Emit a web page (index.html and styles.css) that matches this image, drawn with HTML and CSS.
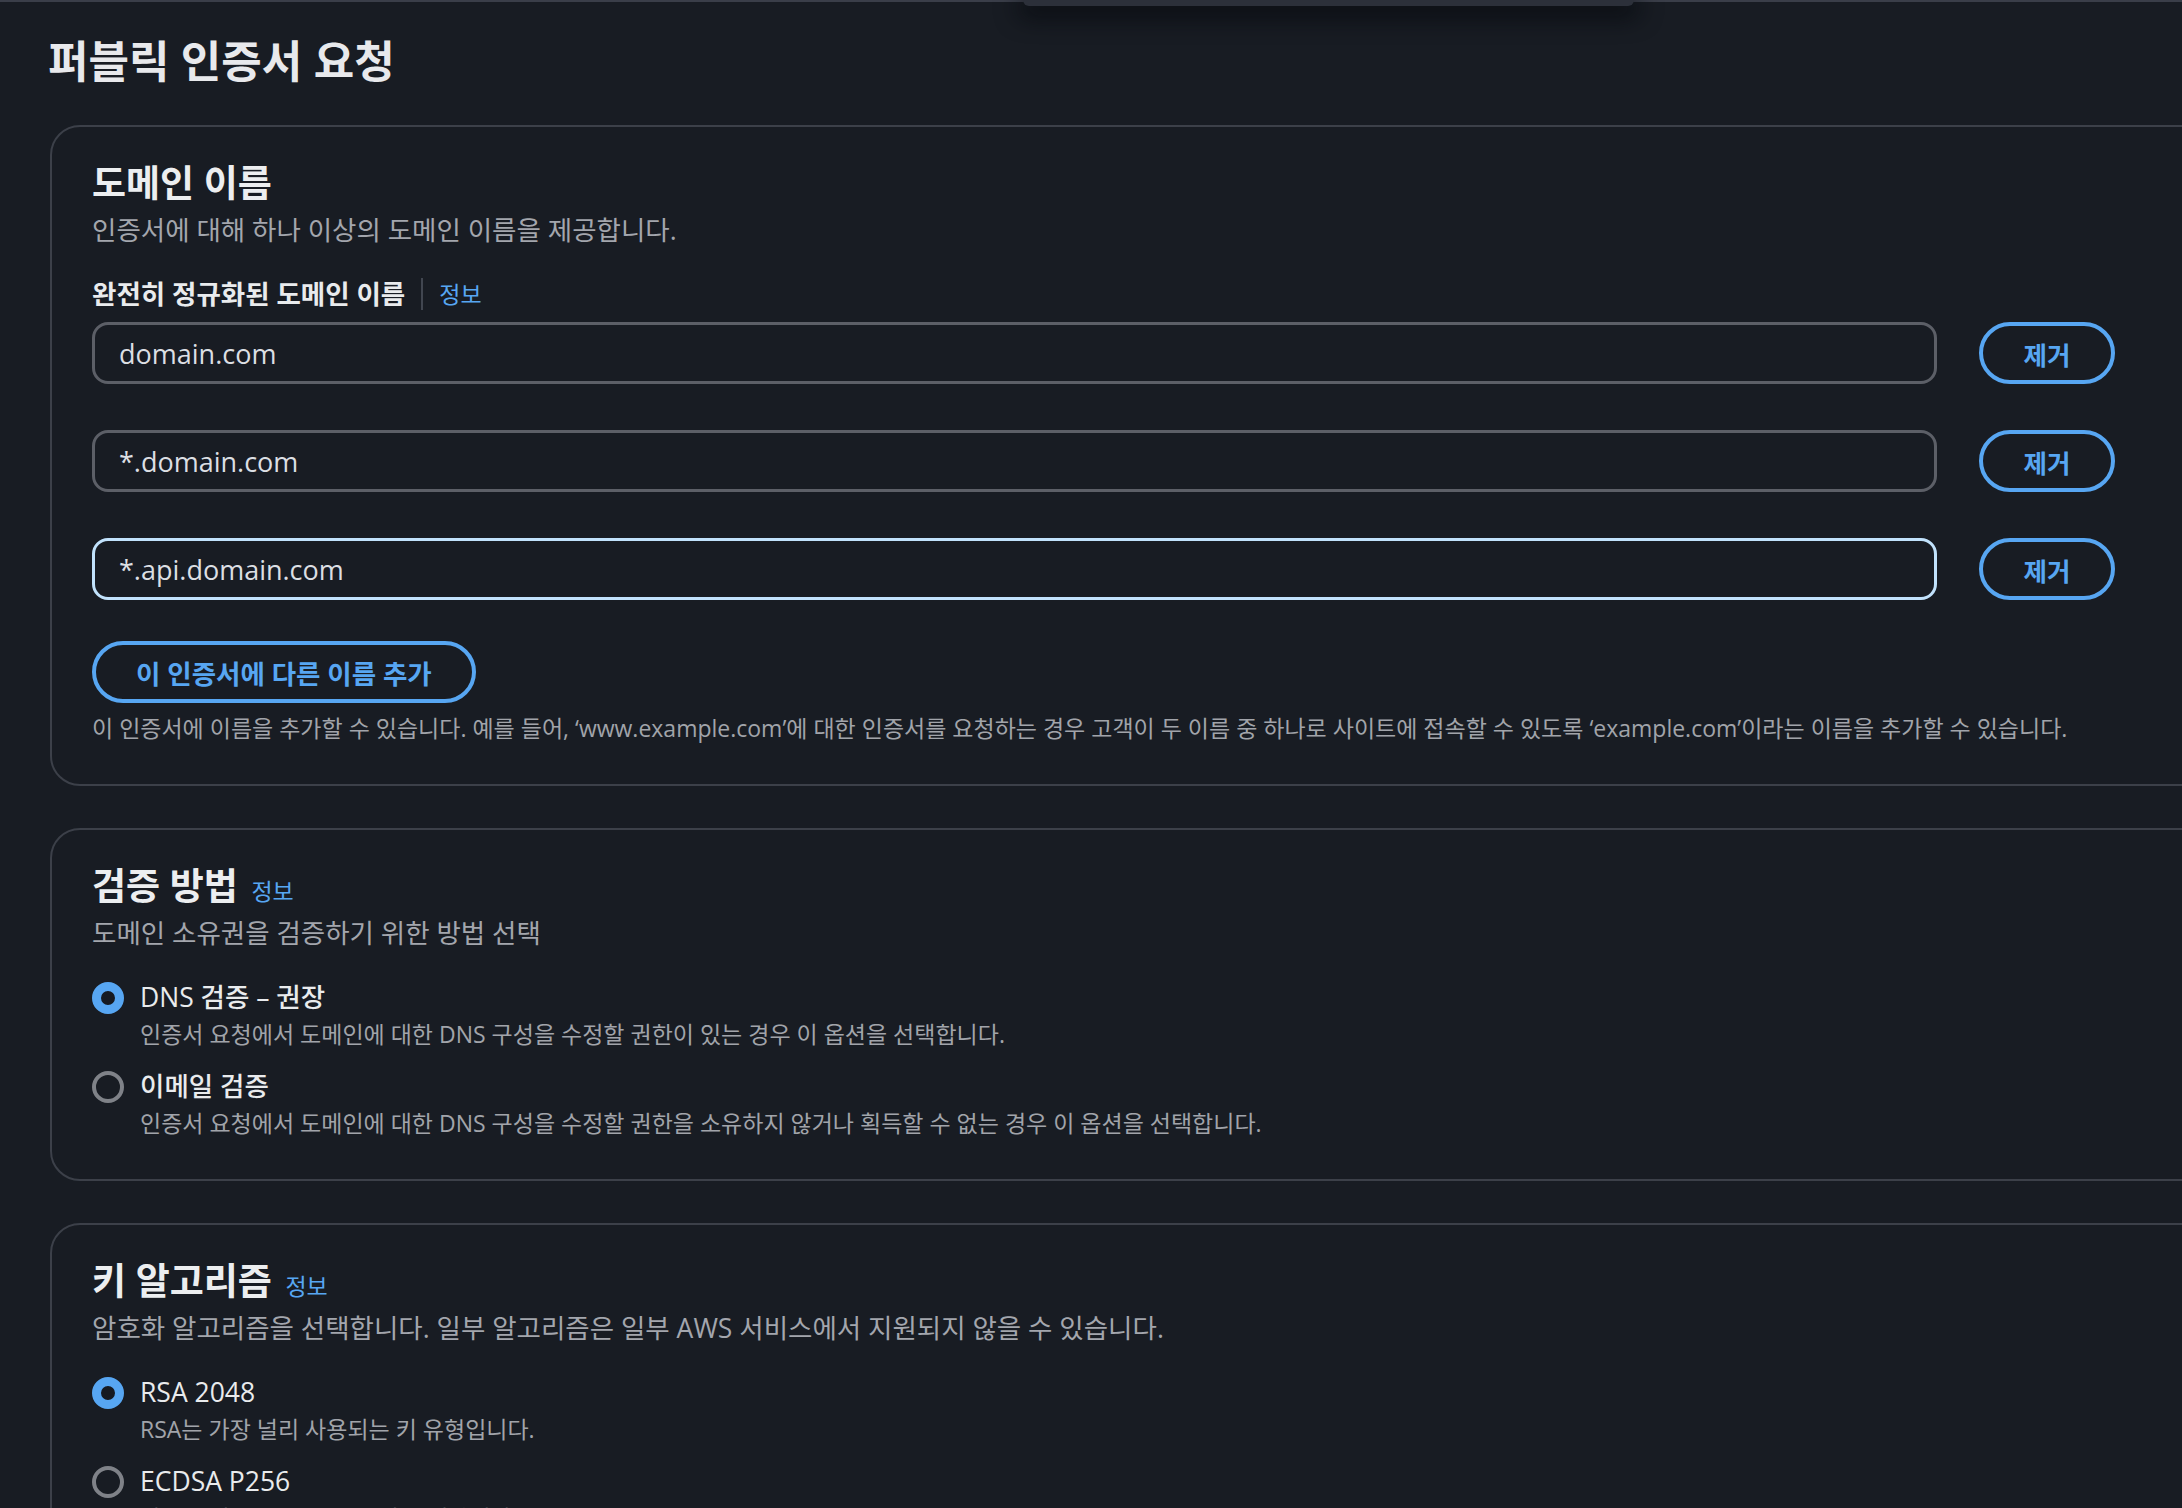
FILE: index.html
```html
<!DOCTYPE html>
<html lang="ko">
<head>
    <meta charset="UTF-8">
    <meta name="viewport" content="width=device-width, initial-scale=1.0">
    <title>퍼블릭 인증서 요청</title>
    <link rel="stylesheet" href="styles.css">
</head>
<body>
    <div class="top-edge"></div>
    <div class="menu-edge"></div>

    <main class="page">
        <h1 class="page-title">퍼블릭 인증서 요청</h1>

        <section class="panel">
            <h2 class="panel-title">도메인 이름</h2>
            <p class="panel-desc">인증서에 대해 하나 이상의 도메인 이름을 제공합니다.</p>

            <div class="field-label">
                <span>완전히 정규화된 도메인 이름</span>
                <span class="divider"></span>
                <a class="info" href="#">정보</a>
            </div>

            <div class="name-list">
                <div class="name-row">
                    <input class="text-input" type="text" value="domain.com">
                    <button class="pill-btn remove-btn">제거</button>
                </div>
                <div class="name-row">
                    <input class="text-input" type="text" value="*.domain.com">
                    <button class="pill-btn remove-btn">제거</button>
                </div>
                <div class="name-row">
                    <input class="text-input focused" type="text" value="*.api.domain.com">
                    <button class="pill-btn remove-btn">제거</button>
                </div>
            </div>

            <button class="pill-btn add-btn">이 인증서에 다른 이름 추가</button>
            <p class="hint">이 인증서에 이름을 추가할 수 있습니다. 예를 들어, ‘www.example.com’에 대한 인증서를 요청하는 경우 고객이 두 이름 중 하나로 사이트에 접속할 수 있도록 ‘example.com’이라는 이름을 추가할 수 있습니다.</p>
        </section>

        <section class="panel">
            <h2 class="panel-title">검증 방법 <a class="info" href="#">정보</a></h2>
            <p class="panel-desc">도메인 소유권을 검증하기 위한 방법 선택</p>

            <div class="radio-group">
                <label class="radio-option">
                    <span class="radio checked"></span>
                    <span class="radio-text">
                        <span class="radio-label">DNS 검증 – 권장</span>
                        <span class="radio-desc">인증서 요청에서 도메인에 대한 DNS 구성을 수정할 권한이 있는 경우 이 옵션을 선택합니다.</span>
                    </span>
                </label>
                <label class="radio-option">
                    <span class="radio"></span>
                    <span class="radio-text">
                        <span class="radio-label">이메일 검증</span>
                        <span class="radio-desc">인증서 요청에서 도메인에 대한 DNS 구성을 수정할 권한을 소유하지 않거나 획득할 수 없는 경우 이 옵션을 선택합니다.</span>
                    </span>
                </label>
            </div>
        </section>

        <section class="panel">
            <h2 class="panel-title">키 알고리즘 <a class="info" href="#">정보</a></h2>
            <p class="panel-desc">암호화 알고리즘을 선택합니다. 일부 알고리즘은 일부 AWS 서비스에서 지원되지 않을 수 있습니다.</p>

            <div class="radio-group">
                <label class="radio-option">
                    <span class="radio checked"></span>
                    <span class="radio-text">
                        <span class="radio-label">RSA 2048</span>
                        <span class="radio-desc">RSA는 가장 널리 사용되는 키 유형입니다.</span>
                    </span>
                </label>
                <label class="radio-option">
                    <span class="radio"></span>
                    <span class="radio-text">
                        <span class="radio-label">ECDSA P256</span>
                        <span class="radio-desc">암호화 강도는 RSA 3072와 동일합니다.</span>
                    </span>
                </label>
            </div>
        </section>
    </main>
</body>
</html>
```

FILE: styles.css
```css
body {
    margin: 0;
    background-color: #181c23;
    color: #e9ebed;
    font-family: "Open Sans", "Noto Sans CJK KR", sans-serif;
    overflow: hidden;
}

.top-edge {
    height: 2px;
    background-color: #3a3e49;
}

/* bottom of a dropdown panel hanging over the page */
.menu-edge {
    position: absolute;
    top: 0;
    left: 1023px;
    width: 611px;
    height: 6px;
    background-color: #2c303a;
    border-radius: 0 0 10px 10px;
    box-shadow: 0 6px 22px 6px rgba(5, 8, 14, 0.75);
}

.page {
    padding: 35px 0 0 48px;
}

.page-title {
    margin: 0 0 40px 0;
    font-size: 44px;
    line-height: 48px;
    font-weight: 700;
    color: #e8e9ec;
}

.panel {
    margin: 0 -60px 42px 2px;
    padding: 34px 40px 41px 40px;
    border: 2px solid #3c4049;
    border-radius: 30px;
}

.panel-title {
    margin: 0;
    font-size: 37px;
    line-height: 44px;
    font-weight: 700;
    color: #eceef0;
}

.panel-title .info {
    margin-left: 4px;
    line-height: 20px;
}

.panel-desc {
    margin: 8px 0 0 0;
    font-size: 26.5px;
    line-height: 34px;
    color: #a3a6ad;
}

.info {
    font-size: 23px;
    font-weight: 400;
    color: #57a6f2;
    text-decoration: none;
}

.field-label {
    display: flex;
    align-items: center;
    margin-top: 30px;
    font-size: 26.5px;
    line-height: 34px;
    font-weight: 700;
}

.field-label .divider {
    width: 2px;
    height: 32px;
    margin: 0 16px;
    background-color: #414650;
}

.name-list {
    display: flex;
    flex-direction: column;
    gap: 46px;
    width: 2023px;
    margin-top: 11px;
}

.name-row {
    display: flex;
    gap: 42px;
}

.text-input {
    flex: 1;
    height: 62px;
    box-sizing: border-box;
    padding: 0 24px;
    border: 3px solid #5c5f67;
    border-radius: 16px;
    background-color: transparent;
    color: #dcdfe3;
    font-family: "Open Sans", "Noto Sans CJK KR", sans-serif;
    font-size: 27px;
    outline: none;
}

.text-input.focused {
    border-color: #c1e2fc;
}

.pill-btn {
    height: 62px;
    box-sizing: border-box;
    border: 4px solid #57a6f2;
    border-radius: 31px;
    background-color: transparent;
    color: #57a6f2;
    font-family: "Open Sans", "Noto Sans CJK KR", sans-serif;
    font-size: 26.5px;
    font-weight: 700;
    cursor: pointer;
}

.remove-btn {
    width: 136px;
    flex: none;
    font-size: 25.5px;
}

.add-btn {
    display: block;
    margin-top: 41px;
    padding: 0 40px;
}

.hint {
    margin: 10px 0 0 0;
    font-size: 23px;
    line-height: 30px;
    color: #a1a4aa;
    white-space: nowrap;
}

.radio-group {
    display: flex;
    flex-direction: column;
    gap: 20px;
    margin-top: 30px;
}

.radio-option {
    display: flex;
    gap: 16px;
}

.radio {
    flex: none;
    width: 32px;
    height: 32px;
    box-sizing: border-box;
    margin-top: 2px;
    border: 4px solid #7f8288;
    border-radius: 50%;
}

.radio.checked {
    border: 9px solid #57a6f2;
    background-color: #161a21;
}

.radio-text {
    display: flex;
    flex-direction: column;
    gap: 5px;
}

.radio-label {
    font-size: 26.5px;
    line-height: 34px;
    font-weight: 500;
    color: #e9ebed;
}

.radio-desc {
    font-size: 23px;
    line-height: 30px;
    color: #a1a4aa;
}
```
